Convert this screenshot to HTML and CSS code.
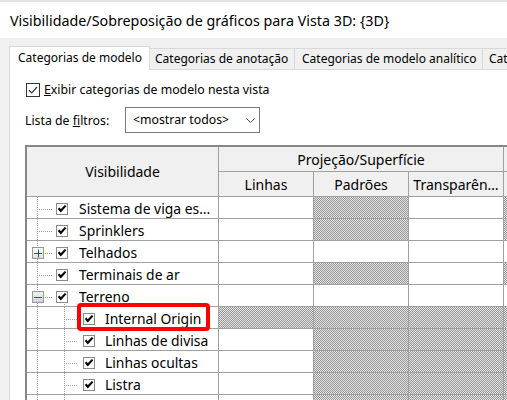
FILE: index.html
```html
<!DOCTYPE html>
<html lang="pt">
<head>
<meta charset="utf-8">
<title>Visibilidade/Sobreposição de gráficos</title>
<link rel="stylesheet" href="styles.css">
</head>
<body>
<div class="dialog">
  <header class="titlebar">Visibilidade/Sobreposição de gráficos para Vista 3D: {3D}</header>
  <nav class="tabs">
    <div class="tab tab-active tab-w1">Categorias de modelo</div>
    <div class="tab tab-w2">Categorias de anotação</div>
    <div class="tab tab-w3">Categorias de modelo analítico</div>
    <div class="tab tab-w4">Cat</div>
  </nav>
  <section class="panel">
    <div class="show-row">
      <span class="chk-main"><svg width="14" height="14" viewBox="0 0 14 14"><rect x="0.5" y="0.5" width="13" height="13" fill="#fff" stroke="#333"/><path d="M3 7.3 L5.8 10 L11 4" fill="none" stroke="#333" stroke-width="1.2"/></svg></span>
      <span class="show-label"><u>E</u>xibir categorias de modelo nesta vista</span>
    </div>
    <div class="filter-row">
      <span class="filter-label">Lista de <u>f</u>iltros:</span>
      <div class="select">
        <span>&lt;mostrar todos&gt;</span>
        <svg class="chev" width="9" height="5" viewBox="0 0 9 5"><path d="M0.5 0.5 L4.5 4.5 L8.5 0.5" fill="none" stroke="#555" stroke-width="1"/></svg>
      </div>
    </div>

    <div class="grid">
      <div class="h h-vis">Visibilidade</div>
      <div class="h h-proj">Projeção/Superfície</div>
      <div class="h h-cut"></div>
      <div class="h">Linhas</div>
      <div class="h">Padrões</div>
      <div class="h">Transparên…</div>
      <div class="h"></div>

      <!-- Sistema de viga -->
      <div class="t root"><span class="joint"></span><span class="tcb"><svg width="12" height="12" viewBox="0 0 12 12"><rect x="0.5" y="0.5" width="11" height="11" fill="#fff" stroke="#8a8a8a"/><path d="M2.6 5.2 L4.8 7.8 L9.6 2.6" fill="none" stroke="#000" stroke-width="2.1"/></svg></span><span class="lbl">Sistema de viga es…</span></div>
      <div class="c"></div><div class="c hatch"></div><div class="c"></div><div class="c hatch"></div>

      <!-- Sprinklers -->
      <div class="t root"><span class="joint"></span><span class="tcb"><svg width="12" height="12" viewBox="0 0 12 12"><rect x="0.5" y="0.5" width="11" height="11" fill="#fff" stroke="#8a8a8a"/><path d="M2.6 5.2 L4.8 7.8 L9.6 2.6" fill="none" stroke="#000" stroke-width="2.1"/></svg></span><span class="lbl">Sprinklers</span></div>
      <div class="c"></div><div class="c hatch"></div><div class="c"></div><div class="c hatch"></div>

      <!-- Telhados -->
      <div class="t root"><span class="joint"><svg width="12" height="12" viewBox="0 0 12 12"><defs><linearGradient id="g1" x1="0" y1="0" x2="0" y2="1"><stop offset="0" stop-color="#fdfdfd"/><stop offset="1" stop-color="#dedede"/></linearGradient></defs><rect x="0.5" y="0.5" width="11" height="11" fill="url(#g1)" stroke="#9a9a9a"/><path d="M2 6.5 H10 M6.5 2.5 V10.5" stroke="#2f4d8c" stroke-width="1"/></svg></span><span class="tcb"><svg width="12" height="12" viewBox="0 0 12 12"><rect x="0.5" y="0.5" width="11" height="11" fill="#fff" stroke="#8a8a8a"/><path d="M2.6 5.2 L4.8 7.8 L9.6 2.6" fill="none" stroke="#000" stroke-width="2.1"/></svg></span><span class="lbl">Telhados</span></div>
      <div class="c"></div><div class="c"></div><div class="c"></div><div class="c"></div>

      <!-- Terminais de ar -->
      <div class="t root"><span class="joint"></span><span class="tcb"><svg width="12" height="12" viewBox="0 0 12 12"><rect x="0.5" y="0.5" width="11" height="11" fill="#fff" stroke="#8a8a8a"/><path d="M2.6 5.2 L4.8 7.8 L9.6 2.6" fill="none" stroke="#000" stroke-width="2.1"/></svg></span><span class="lbl">Terminais de ar</span></div>
      <div class="c"></div><div class="c hatch"></div><div class="c"></div><div class="c hatch"></div>

      <!-- Terreno -->
      <div class="t root open"><span class="joint"><svg width="12" height="12" viewBox="0 0 12 12"><defs><linearGradient id="g2" x1="0" y1="0" x2="0" y2="1"><stop offset="0" stop-color="#f4f4f4"/><stop offset="1" stop-color="#d2d2d2"/></linearGradient></defs><rect x="0.5" y="0.5" width="11" height="11" fill="url(#g2)" stroke="#9a9a9a"/><path d="M2 6.5 H10" stroke="#2f4d8c" stroke-width="1"/></svg></span><span class="tcb"><svg width="12" height="12" viewBox="0 0 12 12"><rect x="0.5" y="0.5" width="11" height="11" fill="#fff" stroke="#8a8a8a"/><path d="M2.6 5.2 L4.8 7.8 L9.6 2.6" fill="none" stroke="#000" stroke-width="2.1"/></svg></span><span class="lbl">Terreno</span></div>
      <div class="c"></div><div class="c"></div><div class="c"></div><div class="c"></div>

      <!-- Internal Origin -->
      <div class="t child"><span class="tcb"><svg width="12" height="12" viewBox="0 0 12 12"><rect x="0.5" y="0.5" width="11" height="11" fill="#fff" stroke="#8a8a8a"/><path d="M2.6 5.2 L4.8 7.8 L9.6 2.6" fill="none" stroke="#000" stroke-width="2.1"/></svg></span><span class="lbl">Internal Origin</span><span class="highlight"></span></div>
      <div class="c hatch"></div><div class="c hatch"></div><div class="c hatch"></div><div class="c hatch"></div>

      <!-- Linhas de divisa -->
      <div class="t child"><span class="tcb"><svg width="12" height="12" viewBox="0 0 12 12"><rect x="0.5" y="0.5" width="11" height="11" fill="#fff" stroke="#8a8a8a"/><path d="M2.6 5.2 L4.8 7.8 L9.6 2.6" fill="none" stroke="#000" stroke-width="2.1"/></svg></span><span class="lbl">Linhas de divisa</span></div>
      <div class="c"></div><div class="c hatch"></div><div class="c hatch"></div><div class="c hatch"></div>

      <!-- Linhas ocultas -->
      <div class="t child"><span class="tcb"><svg width="12" height="12" viewBox="0 0 12 12"><rect x="0.5" y="0.5" width="11" height="11" fill="#fff" stroke="#8a8a8a"/><path d="M2.6 5.2 L4.8 7.8 L9.6 2.6" fill="none" stroke="#000" stroke-width="2.1"/></svg></span><span class="lbl">Linhas ocultas</span></div>
      <div class="c"></div><div class="c hatch"></div><div class="c hatch"></div><div class="c hatch"></div>

      <!-- Listra -->
      <div class="t child"><span class="tcb"><svg width="12" height="12" viewBox="0 0 12 12"><rect x="0.5" y="0.5" width="11" height="11" fill="#fff" stroke="#8a8a8a"/><path d="M2.6 5.2 L4.8 7.8 L9.6 2.6" fill="none" stroke="#000" stroke-width="2.1"/></svg></span><span class="lbl">Listra</span></div>
      <div class="c"></div><div class="c hatch"></div><div class="c hatch"></div><div class="c hatch"></div>

      <!-- next child (cut off by the window) -->
      <div class="t child"><span class="tcb"><svg width="12" height="12" viewBox="0 0 12 12"><rect x="0.5" y="0.5" width="11" height="11" fill="#fff" stroke="#8a8a8a"/><path d="M2.6 5.2 L4.8 7.8 L9.6 2.6" fill="none" stroke="#000" stroke-width="2.1"/></svg></span></div>
      <div class="c"></div><div class="c hatch"></div><div class="c hatch"></div><div class="c hatch"></div>
    </div>
  </section>
</div>
</body>
</html>
```

FILE: styles.css
```css
* { box-sizing: border-box; }

html, body {
  margin: 0;
  padding: 0;
  height: 100%;
  overflow: hidden;
}

body {
  background: #f0f0f0;
  font-family: "Noto Sans", "DejaVu Sans", sans-serif;
  color: #000;
}

.dialog {
  width: 100%;
  height: 400px;
  overflow: hidden;
}

/* ---------- title bar ---------- */
.titlebar {
  height: 38px;
  border-top: 2px solid #e4e4e4;
  background: #fff;
  padding: 2px 0 0 10px;
  font-size: 14.3px;
  line-height: 34px;
  white-space: nowrap;
}

/* ---------- tabs ---------- */
.tabs {
  display: flex;
  align-items: flex-end;
  height: 31px;
  padding: 8px 0 0 9px;
  white-space: nowrap;
}

.tab {
  flex: none;
  height: 21px;
  margin-left: -1px;
  border: 1px solid #d9d9d9;
  border-bottom: 0;
  background: #f0f0f0;
  font-size: 12px;
  line-height: 20px;
  overflow: hidden;
}

.tab-active {
  height: 24px;
  margin-left: 0;
  margin-bottom: -1px;
  background: #fff;
  line-height: 21px;
  position: relative;
  z-index: 1;
}

.tab-w1 { width: 141px; padding-left: 8px; }
.tab-w2 { width: 146px; padding-left: 5px; }
.tab-w3 { width: 189px; padding-left: 7px; }
.tab-w4 { width: 150px; padding-left: 6px; }

/* ---------- panel ---------- */
.panel {
  margin-left: 9px;
  height: 331px;
  border-left: 1px solid #d9d9d9;
  border-top: 1px solid #d9d9d9;
  background: #fff;
  overflow: hidden;
}

.show-row {
  display: flex;
  align-items: center;
  height: 14px;
  margin: 13px 0 0 16px;
  font-size: 12.3px;
  line-height: 14px;
  white-space: nowrap;
}

.chk-main { display: block; width: 14px; height: 14px; }
.chk-main svg { display: block; }
.show-label { margin-left: 4px; }

.filter-row {
  display: flex;
  align-items: center;
  height: 26px;
  margin: 10px 0 0 15px;
  font-size: 12.3px;
  white-space: nowrap;
}

.filter-label { width: 100px; flex: none; }

.select {
  display: flex;
  align-items: center;
  justify-content: space-between;
  width: 135px;
  height: 26px;
  padding: 0 4px 0 7px;
  border: 1px solid #7a7a7a;
  background: #fff;
  line-height: 24px;
}

.chev { display: block; margin-top: 1px; }

/* ---------- grid ---------- */
.grid {
  display: grid;
  width: max-content;
  grid-template-columns: 191px 94px 94px 94px 100px;
  grid-template-rows: 24px 24px repeat(10, 21px);
  gap: 1px;
  margin: 12px 0 0 15px;
  background: #a0a0a0;
  border-left: 2px solid #878787;
  border-top: 2px solid #878787;
}

.h {
  display: flex;
  align-items: center;
  justify-content: center;
  background: #f0f0f0;
  font-size: 14px;
  white-space: nowrap;
  overflow: hidden;
}

.h-vis { grid-row: span 2; }
.h-proj { grid-column: span 3; }

.c { background: #fff; }

.hatch {
  background: repeating-conic-gradient(#939393 0 25%, #e8e8e8 0 50%) 0 0 / 2px 2px;
}

/* tree cells */
.t {
  position: relative;
  display: flex;
  align-items: center;
  padding-top: 2px;
  background-color: #fff;
  font-size: 13.9px;
  line-height: 19px;
  white-space: nowrap;
}

.root {
  padding-left: 5px;
  background-image:
    repeating-linear-gradient(to bottom, #a0a0a0 0 1px, transparent 1px 2px),
    repeating-linear-gradient(to right, #a0a0a0 0 1px, transparent 1px 2px);
  background-position: 10px 0, 12px 12px;
  background-size: 1px 100%, 14px 1px;
  background-repeat: no-repeat;
}

.root.open {
  background-image:
    repeating-linear-gradient(to bottom, #a0a0a0 0 1px, transparent 1px 2px),
    repeating-linear-gradient(to right, #a0a0a0 0 1px, transparent 1px 2px),
    repeating-linear-gradient(to bottom, #a0a0a0 0 1px, transparent 1px 2px);
  background-position: 10px 0, 12px 12px, 37px 17px;
  background-size: 1px 100%, 14px 1px, 1px 10px;
}

.child {
  padding-left: 56px;
  background-image:
    repeating-linear-gradient(to bottom, #a0a0a0 0 1px, transparent 1px 2px),
    repeating-linear-gradient(to bottom, #a0a0a0 0 1px, transparent 1px 2px),
    repeating-linear-gradient(to right, #a0a0a0 0 1px, transparent 1px 2px);
  background-position: 10px 0, 37px 0, 39px 12px;
  background-size: 1px 100%, 1px 100%, 11px 1px;
  background-repeat: no-repeat;
}

.joint {
  display: block;
  flex: none;
  width: 12px;
  height: 12px;
}
.joint svg { display: block; }

.tcb { display: block; flex: none; width: 12px; height: 12px; }
.tcb svg { display: block; }

.root .tcb { margin-left: 12px; }
.root .lbl { margin-left: 11px; }
.child .lbl { margin-left: 10px; }

/* red annotation box around "Internal Origin" */
.highlight {
  position: absolute;
  left: 50px;
  top: -4px;
  width: 133px;
  height: 28px;
  border: 4px solid #ff0000;
  border-radius: 4px;
  z-index: 2;
  pointer-events: none;
}
```
